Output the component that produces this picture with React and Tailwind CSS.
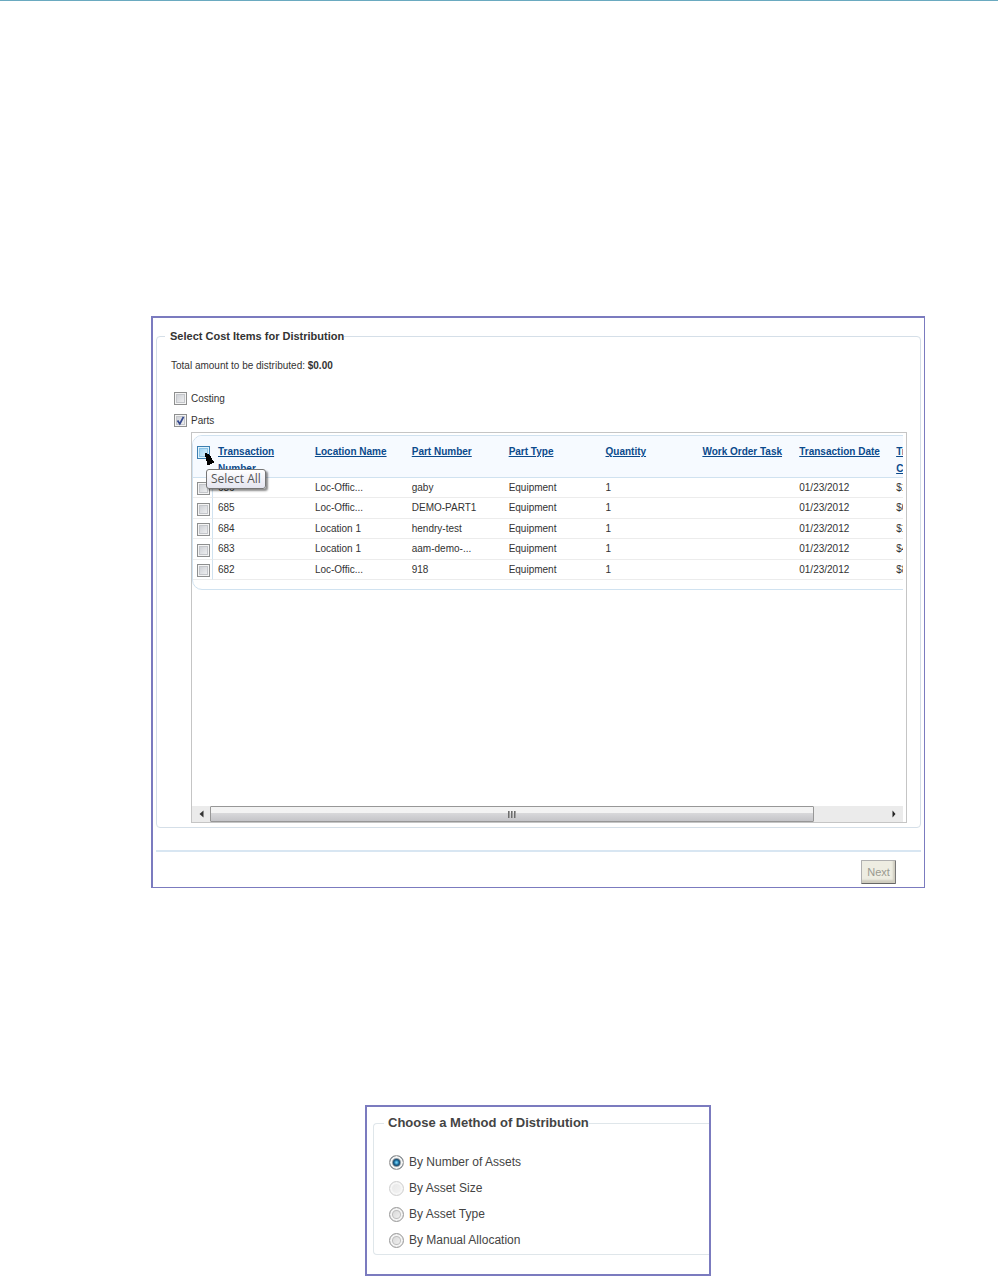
import { useState } from 'react';

const columns = ['Transaction Number', 'Location Name', 'Part Number', 'Part Type', 'Quantity', 'Work Order Task', 'Transaction Date', 'Transaction\nCost'];

const parts = [
  { id: '686', location: 'Loc-Offic...', part: 'gaby', type: 'Equipment', quantity: 1, task: '', date: '01/23/2012', cost: '$12.00' },
  { id: '685', location: 'Loc-Offic...', part: 'DEMO-PART1', type: 'Equipment', quantity: 1, task: '', date: '01/23/2012', cost: '$0.00' },
  { id: '684', location: 'Location 1', part: 'hendry-test', type: 'Equipment', quantity: 1, task: '', date: '01/23/2012', cost: '$10.00' },
  { id: '683', location: 'Location 1', part: 'aam-demo-...', type: 'Equipment', quantity: 1, task: '', date: '01/23/2012', cost: '$45.00' },
  { id: '682', location: 'Loc-Offic...', part: '918', type: 'Equipment', quantity: 1, task: '', date: '01/23/2012', cost: '$8.00' },
];

const methods = [
  { value: 'number', label: 'By Number of Assets' },
  { value: 'size', label: 'By Asset Size', disabled: true },
  { value: 'type', label: 'By Asset Type' },
  { value: 'manual', label: 'By Manual Allocation' },
];

function Checkbox({ hot = false, ...props }) {
  return (
    <span className="relative block h-[13px] w-[13px] shrink-0">
      <input
        type="checkbox"
        className={`peer block h-[13px] w-[13px] appearance-none border bg-linear-to-br ${
          hot
            ? 'border-[#3c7fb1] from-[#8fcdf2] to-[#e8f7ff] shadow-[inset_0_0_0_1px_#dff3fd,inset_0_0_0_2px_#8cc4e6]'
            : 'border-[#8e8f8f] from-[#c6c9cf] to-[#f6f6f6] shadow-[inset_0_0_0_1px_#f4f4f4,inset_0_0_0_2px_#c4c6ca]'
        }`}
        {...props}
      />
      <svg viewBox="0 0 13 13" className="pointer-events-none absolute inset-0 hidden h-[13px] w-[13px] peer-checked:block" aria-hidden="true">
        <path d="M3.5 6.5 5.8 9.8 9.5 2.8" fill="none" stroke="#35498f" strokeWidth="1.8" />
      </svg>
    </span>
  );
}

function SelectAll({ checked, onChange }) {
  return (
    <div className="relative">
      <Checkbox hot aria-label="Select All" checked={checked} onChange={onChange} />
      <svg viewBox="0 0 10 12" className="pointer-events-none absolute left-[8px] top-[7px] z-20 h-3 w-[10px]" aria-hidden="true">
        <path d="M0 0H2V1H4V2H5V3H6V5H7V7H8V8H9V10H7V11H5V12H2V8H1V4H0Z" fill="#000" />
      </svg>
      <div
        role="tooltip"
        className="absolute left-[9px] top-[23px] z-10 flex h-5 items-center whitespace-nowrap rounded-[3px] border border-[#767676] bg-linear-to-b from-white to-[#e4e5f0] px-1 font-['Open_Sans',sans-serif] text-[12px] font-normal leading-none text-[#575757] shadow-[2px_2px_2px_rgba(0,0,0,0.45)]"
      >
        Select All
      </div>
    </div>
  );
}

function PartsTable() {
  const [selected, setSelected] = useState([]);

  function toggle(id) {
    setSelected((ids) => (ids.includes(id) ? ids.filter((item) => item !== id) : [...ids, id]));
  }

  function toggleAll(event) {
    setSelected(event.target.checked ? parts.map((row) => row.id) : []);
  }

  return (
    <div className="mt-px ml-[34px] mr-[13px] flex h-[391px] flex-col border border-[#c5c5c5] pr-[3px] pt-[2px]">
      <div className="flex-1 overflow-hidden">
        <div className="w-[797px] overflow-hidden rounded-l-[10px] border border-[#d0e2f0] pb-[9px]">
          <table className="w-full table-fixed border-separate border-spacing-0 text-left text-[10px] text-[#333]">
            <thead>
              <tr className="bg-[#f6faff] align-top">
                <th className="w-5 border-b border-[#d0e2f0] pl-1 pt-[10px]">
                  <SelectAll checked={selected.length === parts.length} onChange={toggleAll} />
                </th>
                {columns.map((name) => (
                  <th key={name} className="whitespace-pre-line border-b border-[#d0e2f0] pl-[5px] pt-[7px] leading-[17px]">
                    <a href="#sort" className="text-[#0b4a8c] underline">{name}</a>
                  </th>
                ))}
              </tr>
            </thead>
            <tbody>
              {parts.map((row) => (
                <tr key={row.id} className="h-5 even:h-[21px] *:border-b *:border-[#ececec] *:py-0 *:pl-[5px] *:leading-4">
                  <td className="border-r border-r-[#d0e2f0]! pl-1! pt-[2px]!">
                    <Checkbox aria-label={`Select transaction ${row.id}`} checked={selected.includes(row.id)} onChange={() => toggle(row.id)} />
                  </td>
                  <td>{row.id}</td>
                  <td>{row.location}</td>
                  <td>{row.part}</td>
                  <td>{row.type}</td>
                  <td>{row.quantity}</td>
                  <td>{row.task}</td>
                  <td>{row.date}</td>
                  <td>{row.cost}</td>
                </tr>
              ))}
            </tbody>
          </table>
        </div>
      </div>

      <div className="flex h-4 bg-[#ebebeb]">
        <button type="button" aria-label="Scroll left" className="flex w-[18px] items-center justify-center">
          <svg viewBox="0 0 5 8" className="h-2 w-[5px]" aria-hidden="true">
            <path d="M4.5 0.5V7.5L0.5 4Z" fill="#333" />
          </svg>
        </button>
        <div className="mr-[71px] flex flex-1 items-center justify-center gap-px rounded-[1px] border border-[#979797] bg-linear-to-b from-[#f3f3f3] from-40% via-[#d8d8da] via-45% to-[#c4c4c8]">
          <span className="h-[7px] w-[2px] bg-linear-to-r from-[#555] to-[#bbb]" />
          <span className="h-[7px] w-[2px] bg-linear-to-r from-[#555] to-[#bbb]" />
          <span className="h-[7px] w-[2px] bg-linear-to-r from-[#555] to-[#bbb]" />
        </div>
        <button type="button" aria-label="Scroll right" className="flex w-[18px] items-center justify-center">
          <svg viewBox="0 0 4 8" className="h-2 w-1" aria-hidden="true">
            <path d="M0.5 0.5V7.5L3.5 4Z" fill="#222" />
          </svg>
        </button>
      </div>
    </div>
  );
}

function CostItems() {
  const [costing, setCosting] = useState(false);
  const [showParts, setShowParts] = useState(true);

  return (
    <section className="border border-l-2 border-t-2 border-[#7b7bbf] px-[3px] pb-[3px] pt-[11px]">
      <fieldset className="min-w-0 rounded-[4px] border border-[#d5dfe8] pb-[4px]">
        <legend className="ml-2 pl-[5px] text-[11px] font-bold leading-[14px] text-[#333]">Select Cost Items for Distribution</legend>
        <p className="mt-[15px] pl-[14px] text-[10px] leading-4 text-[#333]">
          Total amount to be distributed: <b>$0.00</b>
        </p>
        <div className="mt-[13px] flex flex-col pl-[17px] text-[10px] text-[#333]">
          <label className="flex h-[22px] items-center gap-1">
            <Checkbox checked={costing} onChange={(event) => setCosting(event.target.checked)} />
            Costing
          </label>
          <label className="flex h-[22px] items-center gap-1">
            <Checkbox checked={showParts} onChange={(event) => setShowParts(event.target.checked)} />
            Parts
          </label>
        </div>
        {showParts && <PartsTable />}
      </fieldset>

      <div className="mt-[22px] flex justify-end border-t-2 border-[#d8e6f2] pr-[25px] pt-2">
        <button
          type="button"
          disabled
          className="h-6 w-[35px] rounded-[1px] border border-[#b0b0b0] border-b-[#666] border-r-[#777] bg-[#eeede2] text-[11px] text-[#9a9a90] shadow-[inset_-2px_-3px_2px_#cfcdbf]"
        >
          Next
        </button>
      </div>
    </section>
  );
}

function DistributionMethod() {
  const [method, setMethod] = useState('number');

  return (
    <section className="mx-auto mt-[217px] w-[346px] border-2 border-[#7b7bbf] pb-[19px] pl-[6px] pt-[8px]">
      <fieldset className="min-w-0 rounded-l-[4px] border border-r-0 border-[#dfe6ea] pb-px">
        <legend className="ml-[10px] pl-1 text-[13px] font-bold leading-4 text-[#444]">Choose a Method of Distribution</legend>
        <div className="mt-[18px] pl-[15px]">
          {methods.map(({ value, label, disabled }) => (
            <label key={value} className="flex h-[26px] items-center gap-[5px] text-[12px] text-[#444]">
              <input
                type="radio"
                name="method"
                value={value}
                disabled={disabled}
                checked={method === value}
                onChange={() => setMethod(value)}
                className="h-[15px] w-[15px] appearance-none rounded-full border border-[#9a9a9a] bg-linear-to-br from-[#cfcfcf] to-[#fafafa] shadow-[inset_0_0_0_2px_#f4f4f4,inset_0_0_0_3px_#bdbdbd] checked:bg-radial checked:from-[#6fd0f5] checked:from-5% checked:via-[#1c6c9c] checked:via-25% checked:to-[#0d2c47] checked:to-45% checked:shadow-[inset_0_0_0_2px_#f4f4f4,inset_0_0_0_3px_#8d9aa3] disabled:border-[#cfcfcf] disabled:from-[#e6e6e6] disabled:to-[#f4f4f4] disabled:shadow-[inset_0_0_0_2px_#f6f6f6]"
              />
              {label}
            </label>
          ))}
        </div>
      </fieldset>
    </section>
  );
}

export default function App() {
  return (
    <main className="border-t border-[#6aaac0] bg-white pl-[151px] pr-[73px] pt-[315px] font-['Liberation_Sans',Arial,sans-serif]">
      <CostItems />
      <DistributionMethod />
    </main>
  );
}
